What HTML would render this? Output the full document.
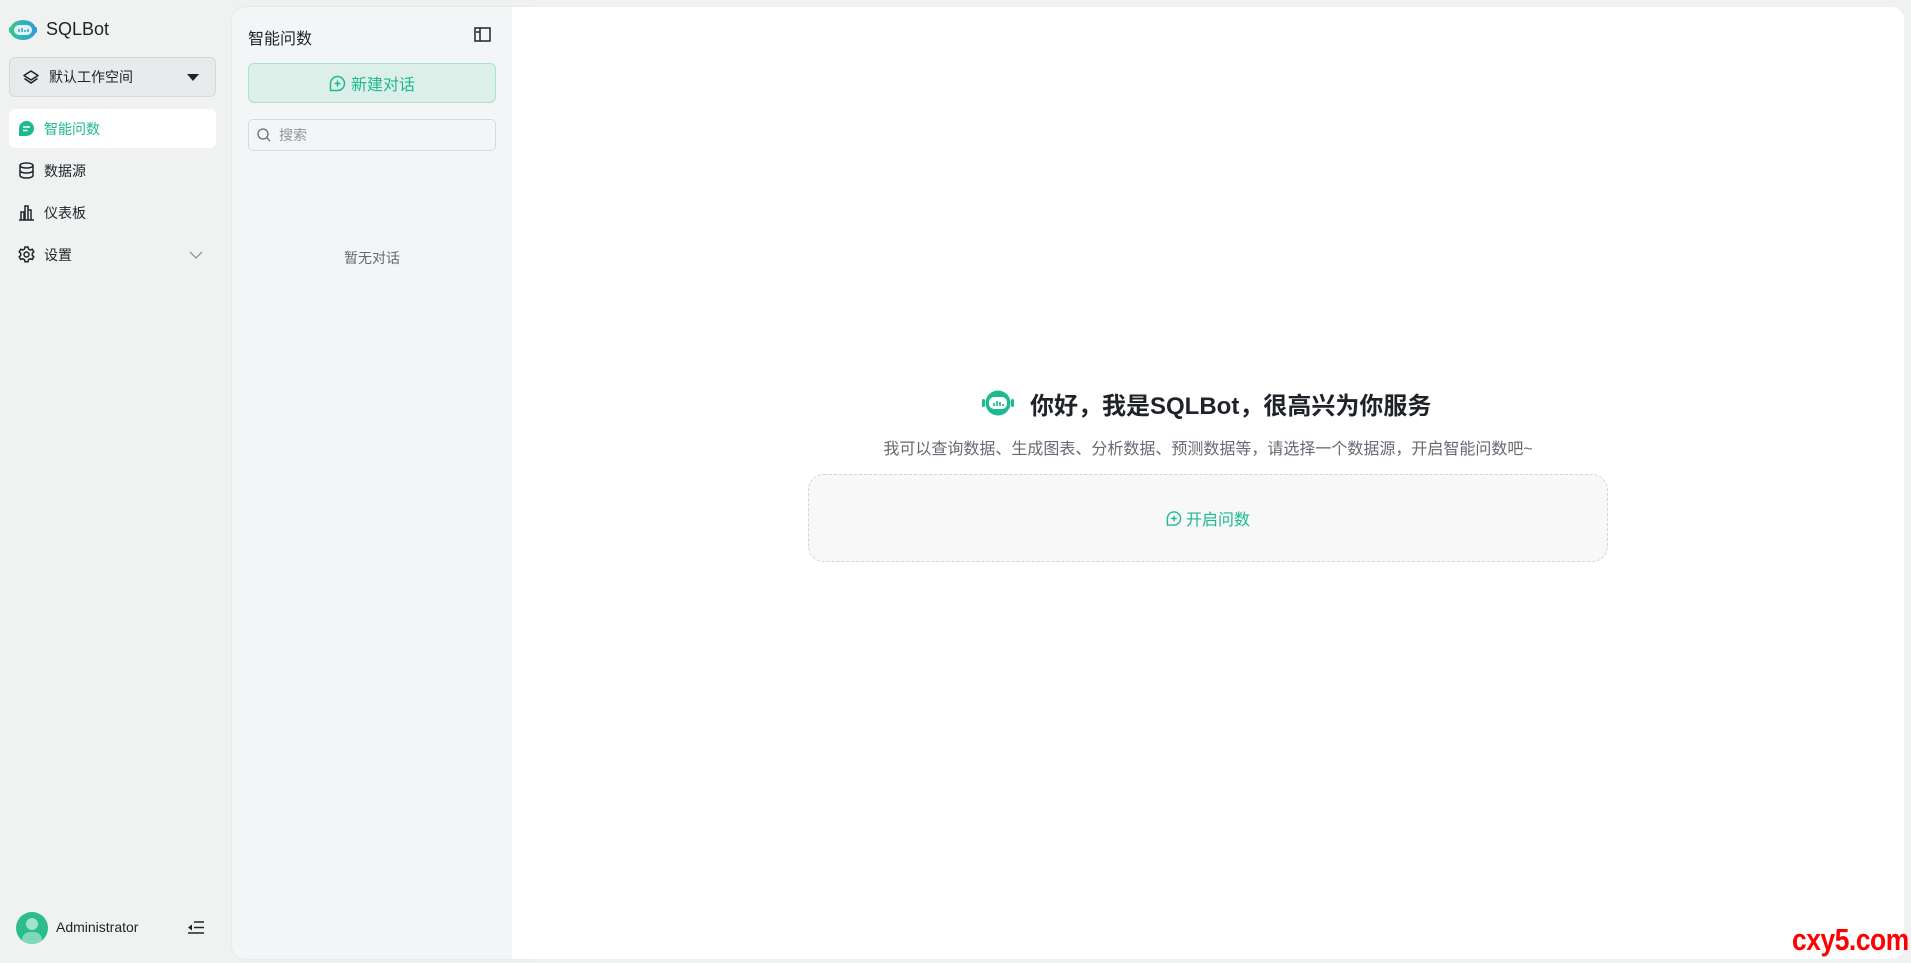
<!DOCTYPE html><html><head><meta charset="utf-8"><style>
*{box-sizing:border-box;margin:0;padding:0}
body{width:1911px;height:963px;background:#f0f1f1;font-family:"Liberation Sans","Noto Sans CJK SC",sans-serif;position:relative;overflow:hidden;color:#1f2329}
.abs{position:absolute}
.nav{position:absolute;left:9px;width:207px;height:39px;display:flex;align-items:center;padding-left:9px;font-size:14px;color:#1f2329}
.nav svg{margin-right:9px}
</style></head><body>
<svg class="abs" style="left:8px;top:18px" width="30" height="24" viewBox="0 0 30 24"><defs><linearGradient id="g" x1="0" x2="1"><stop offset="0" stop-color="#3cc48f"/><stop offset="1" stop-color="#2a9fd8"/></linearGradient></defs><ellipse cx="15" cy="12" rx="13" ry="10" fill="url(#g)"/><rect x="1" y="9" width="3" height="6" rx="1.5" fill="#3cc48f"/><rect x="26" y="9" width="3" height="6" rx="1.5" fill="#2a9fd8"/><rect x="6" y="7" width="18" height="10" rx="5" fill="#dff3f6"/><path d="M11 14v-3M14 14v-4M17 14v-2M20 14v-3" stroke="#3aa7c8" stroke-width="1.6"/></svg>
<div class="abs" style="left:46px;top:19px;font-size:18px;color:#1f2329">SQLBot</div>
<div class="abs" style="left:9px;top:57px;width:207px;height:40px;border:1px solid #d6d8da;border-radius:6px;background:#e9eaeb;display:flex;align-items:center;padding-left:12px;font-size:14px">
<svg width="18" height="16" viewBox="0 0 18 16" style="margin-right:9px"><path d="M9 2L16 6.5 9 11 2 6.5Z" fill="none" stroke="#1f2329" stroke-width="1.6" stroke-linejoin="round"/><path d="M2.5 9.5L9 14l6.5-4.5" fill="none" stroke="#1f2329" stroke-width="1.6"/></svg>默认工作空间
<svg class="abs" style="left:177px;top:16px" width="12" height="8"><path d="M0 0h12L6 7z" fill="#1f2329"/></svg></div>
<div class="nav" style="top:109px;background:#fff;border-radius:6px;color:#1cba90"><svg width="17" height="17" viewBox="0 0 17 17"><path d="M8.5 1a7.5 7.5 0 1 1 0 15H1V8.5A7.5 7.5 0 0 1 8.5 1z" fill="#1cba90"/><path d="M5 7h7M5 10.5h4.5" stroke="#fff" stroke-width="1.6"/></svg>智能问数</div>
<div class="nav" style="top:151px"><svg width="17" height="17" viewBox="0 0 17 17" fill="none" stroke="#1f2329" stroke-width="1.5"><ellipse cx="8.5" cy="3.5" rx="6.5" ry="2.5"/><path d="M2 3.5v10c0 1.4 2.9 2.5 6.5 2.5s6.5-1.1 6.5-2.5v-10M2 8.5c0 1.4 2.9 2.5 6.5 2.5s6.5-1.1 6.5-2.5"/></svg>数据源</div>
<div class="nav" style="top:193px"><svg width="17" height="17" viewBox="0 0 17 17" fill="none" stroke="#1f2329" stroke-width="1.5"><path d="M1 16h15M3 16V8h3v8M7 16V2h3v14M10 16V6h3v10"/></svg>仪表板</div>
<div class="nav" style="top:235px"><svg width="17" height="17" viewBox="0 0 17 17" fill="none" stroke="#1f2329" stroke-width="1.5"><path d="M7 1h3l.5 2 1.8 1 2-.7 1.5 2.6-1.5 1.4v2.1l1.5 1.4-1.5 2.6-2-.7-1.8 1-.5 2H7l-.5-2-1.8-1-2 .7-1.5-2.6 1.5-1.4V7.3L1.2 5.9l1.5-2.6 2 .7 1.8-1z"/><circle cx="8.5" cy="8.5" r="2.5"/></svg>设置
<svg class="abs" style="left:180px;top:16px" width="14" height="8"><path d="M1 1l6 6 6-6" fill="none" stroke="#8f959e" stroke-width="1.3"/></svg></div>
<div class="abs" style="left:16px;top:912px;width:32px;height:32px;border-radius:50%;background:#2cbc8e;overflow:hidden"><div class="abs" style="left:10px;top:6px;width:12px;height:12px;border-radius:50%;background:#9fe3cb"></div><div class="abs" style="left:6px;top:20px;width:20px;height:14px;border-radius:8px 8px 0 0;background:#7fd8b9"></div></div>
<div class="abs" style="left:56px;top:919px;font-size:14px;color:#1f2329">Administrator</div>
<svg class="abs" style="left:187px;top:920px" width="18" height="15"><path d="M7 2h10M7 7.5h10M1 13h16" stroke="#1f2329" stroke-width="1.6"/><path d="M1 7.5l4-3v6z" fill="#1f2329"/></svg>
<div class="abs" style="left:232px;top:7px;width:300px;height:952px;background:#f4f5f6;border-radius:14px 0 0 14px;box-shadow:0 0 2px rgba(0,0,0,.08)"></div>
<div class="abs" style="left:248px;top:25px;font-size:16px">智能问数</div>
<svg class="abs" style="left:474px;top:27px" width="17" height="15"><rect x="1" y="1" width="15" height="13" fill="none" stroke="#1f2329" stroke-width="1.5"/><path d="M6 1v13M2 5h4" stroke="#1f2329" stroke-width="1.5"/></svg>
<div class="abs" style="left:248px;top:63px;width:248px;height:40px;border:1px solid #a8e3cf;border-radius:6px;background:#dcefe9;display:flex;align-items:center;justify-content:center;color:#1cba90;font-size:16px"><svg width="17" height="17" viewBox="0 0 17 17" style="margin-right:5px"><path d="M8.5 1.5a7 7 0 1 1 0 14H1.5V8.5a7 7 0 0 1 7-7z" fill="none" stroke="#1cba90" stroke-width="1.5"/><path d="M8.5 5.5v6M5.5 8.5h6" stroke="#1cba90" stroke-width="1.5"/></svg>新建对话</div>
<div class="abs" style="left:248px;top:119px;width:248px;height:32px;border:1px solid #d6d8da;border-radius:5px;background:#f4f5f6;display:flex;align-items:center;padding-left:8px;color:#8f959e;font-size:14px"><svg width="14" height="14" style="margin-right:8px"><circle cx="6" cy="6" r="5" fill="none" stroke="#646a73" stroke-width="1.3"/><path d="M10 10l3 3" stroke="#646a73" stroke-width="1.3"/></svg>搜索</div>
<div class="abs" style="left:248px;top:248px;width:248px;text-align:center;font-size:14px;color:#646a73">暂无对话</div>
<div class="abs" style="left:512px;top:7px;width:1392px;height:952px;background:#fff;border-radius:0 12px 12px 0"></div>
<svg class="abs" style="left:982px;top:389px" width="32" height="28" viewBox="0 0 32 28"><rect x="0" y="10" width="3" height="8" rx="1.5" fill="#1cba90"/><rect x="29" y="10" width="3" height="8" rx="1.5" fill="#1cba90"/><circle cx="16" cy="14" r="12.5" fill="#1cba90"/><rect x="7" y="8" width="18" height="12" rx="5" fill="#fff"/><path d="M12 17v-3M15 17v-5M18 17v-4M21 17v-2" stroke="#1cba90" stroke-width="1.7"/></svg>
<div class="abs" style="left:1030px;top:386px;font-size:24px;font-weight:bold;color:#1f2329">你好，我是SQLBot，很高兴为你服务</div>
<div class="abs" style="left:808px;top:435px;width:800px;text-align:center;font-size:16px;color:#646a73">我可以查询数据、生成图表、分析数据、预测数据等，请选择一个数据源，开启智能问数吧~</div>
<div class="abs" style="left:808px;top:474px;width:800px;height:88px;border:1px dashed #d3d5d8;border-radius:16px;background:#f8f8f9;display:flex;align-items:center;justify-content:center;color:#1cba90;font-size:16px"><svg width="16" height="17" viewBox="0 0 17 17" style="margin-right:4px"><path d="M8.5 1.5a7 7 0 1 1 0 14H1.5V8.5a7 7 0 0 1 7-7z" fill="none" stroke="#1cba90" stroke-width="1.5"/><path d="M8.5 5.5v6M5.5 8.5h6" stroke="#1cba90" stroke-width="1.5"/></svg>开启问数</div>
<div class="abs" style="left:1792px;top:922px;font-size:31px;font-weight:bold;color:#f00;transform:scaleX(.85);transform-origin:left;letter-spacing:-0.5px">cxy5.com</div>
</body></html>
